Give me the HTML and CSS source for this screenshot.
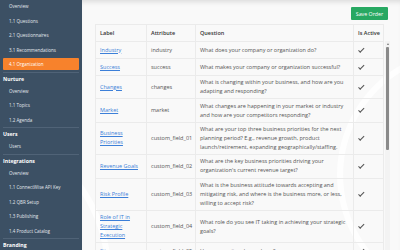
FILE: index.html
```html
<!DOCTYPE html>
<html lang="en">
<head>
    <meta charset="UTF-8">
    <title>Organization</title>
    <link rel="stylesheet" href="styles.css">
</head>
<body>
    <div class="layout">
        <nav class="sidebar">
            <div class="nav-section first">
                <a class="nav-item">Overview</a>
                <a class="nav-item">1.1 Questions</a>
                <a class="nav-item">2.1 Questionnaires</a>
                <a class="nav-item">3.1 Recommendations</a>
                <a class="nav-item active">4.1 Organization</a>
            </div>
            <div class="nav-section">
                <div class="nav-title">Nurture</div>
                <a class="nav-item">Overview</a>
                <a class="nav-item">1.1 Topics</a>
                <a class="nav-item">1.2 Agenda</a>
            </div>
            <div class="nav-section">
                <div class="nav-title">Users</div>
                <a class="nav-item">Users</a>
            </div>
            <div class="nav-section">
                <div class="nav-title">Integrations</div>
                <a class="nav-item">Overview</a>
                <a class="nav-item">1.1 ConnectWise API Key</a>
                <a class="nav-item">1.2 QBR Setup</a>
                <a class="nav-item">1.3 Publishing</a>
                <a class="nav-item">1.4 Product Catalog</a>
            </div>
            <div class="nav-section">
                <div class="nav-title">Branding</div>
            </div>
        </nav>

        <main class="content">
            <div class="toolbar">
                <button class="btn-save">Save Order</button>
            </div>

            <div class="table-wrap">
                <table class="fields">
                    <thead>
                        <tr>
                            <th class="col-label">Label</th>
                            <th class="col-attr">Attribute</th>
                            <th class="col-question">Question</th>
                            <th class="col-active">Is Active</th>
                        </tr>
                    </thead>
                    <tbody>
                        <tr>
                            <td><a href="#">Industry</a></td>
                            <td>industry</td>
                            <td>What does your company or organization do?</td>
                            <td><span class="check"></span></td>
                        </tr>
                        <tr>
                            <td><a href="#">Success</a></td>
                            <td>success</td>
                            <td>What makes your company or organization successful?</td>
                            <td><span class="check"></span></td>
                        </tr>
                        <tr>
                            <td><a href="#">Changes</a></td>
                            <td>changes</td>
                            <td>What is changing within your business, and how are you adapting and responding?</td>
                            <td><span class="check"></span></td>
                        </tr>
                        <tr>
                            <td><a href="#">Market</a></td>
                            <td>market</td>
                            <td>What changes are happening in your market or industry and how are your competitors responding?</td>
                            <td><span class="check"></span></td>
                        </tr>
                        <tr>
                            <td><a href="#">Business Priorities</a></td>
                            <td>custom_field_01</td>
                            <td>What are your top three business priorities for the next planning period? E.g., revenue growth, product launch/retirement, expanding geographically/staffing.</td>
                            <td><span class="check"></span></td>
                        </tr>
                        <tr>
                            <td><a href="#">Revenue Goals</a></td>
                            <td>custom_field_02</td>
                            <td>What are the key business priorities driving your organization's current revenue target?</td>
                            <td><span class="check"></span></td>
                        </tr>
                        <tr>
                            <td><a href="#">Risk Profile</a></td>
                            <td>custom_field_03</td>
                            <td>What is the business attitude towards accepting and mitigating risk, and where is the business more, or less, willing to accept risk?</td>
                            <td><span class="check"></span></td>
                        </tr>
                        <tr>
                            <td><a href="#">Role of IT in Strategic Execution</a></td>
                            <td>custom_field_04</td>
                            <td>What role do you see IT taking in achieving your strategic goals?</td>
                            <td><span class="check"></span></td>
                        </tr>
                        <tr>
                            <td><a href="#">Sites</a></td>
                            <td>custom_field_05</td>
                            <td>How many sites do you have?</td>
                            <td><span class="check"></span></td>
                        </tr>
                    </tbody>
                </table>

                <div class="scrollbar">
                    <span class="scroll-arrow"></span>
                    <span class="scroll-thumb"></span>
                </div>
            </div>
        </main>
    </div>
</body>
</html>
```

FILE: styles.css
```css
* {
    margin: 0;
    padding: 0;
    box-sizing: border-box;
}

html, body {
    height: 100%;
    overflow: hidden;
}

body {
    font-family: 'Open Sans', 'Liberation Sans', sans-serif;
    color: #555;
    background: #fafafa;
}

.layout {
    display: flex;
    height: 100%;
}

/* Sidebar */
.sidebar {
    width: 82px;
    flex-shrink: 0;
    background: #3c5064;
    padding: 0 3px;
    box-shadow: 1px 0 2px rgba(0,0,0,0.15);
}

.nav-section {
    border-top: 1px solid #506377;
}

.nav-section.first {
    border-top: none;
    margin-top: -1px;
}

.nav-title {
    color: #fff;
    font-weight: 700;
    font-size: 5.2px;
    line-height: 10px;
    padding-top: 1px;
}

.nav-item {
    display: flex;
    align-items: center;
    height: 14.5px;
    padding-left: 6px;
    font-size: 4.5px;
    color: #e4e9ee;
}

.nav-item.active {
    background: #f7822c;
    color: #fff;
    height: 12px;
    margin: 1.25px 0;
    border-radius: 1px;
}

/* Content */
.content {
    flex: 1;
    overflow: hidden;
    padding: 7px 10px 0 13px;
    box-shadow: inset 0 5px 5px -3px rgba(0,0,0,0.12);
    background:
        radial-gradient(circle at 120% 70%, transparent 120px, rgba(255,255,255,0.9) 121px, rgba(255,255,255,0.9) 126px, transparent 127px),
        radial-gradient(circle at -40% 110%, transparent 150px, rgba(255,255,255,0.9) 151px, rgba(255,255,255,0.9) 156px, transparent 157px),
        #f9f9f9;
}

.toolbar {
    display: flex;
    justify-content: flex-end;
    padding-right: 2px;
    margin-bottom: 4px;
}

.btn-save {
    font-family: inherit;
    font-size: 5.3px;
    color: #fff;
    background: #27a862;
    border: none;
    border-radius: 1px;
    width: 37px;
    height: 13px;
}

.table-wrap {
    display: flex;
}

.fields {
    width: 288px;
    flex-shrink: 0;
    table-layout: fixed;
    border-collapse: collapse;
    font-size: 5.5px;
    line-height: 9px;
    border: 1px solid #ebebeb;
}

.fields th,
.fields td {
    border: 1px solid #ebebeb;
    padding: 2.2px 4px;
    text-align: left;
    vertical-align: middle;
}

.fields th {
    color: #333;
    font-weight: 600;
    white-space: nowrap;
}

.fields tr {
    height: 17px;
}

.col-label { width: 51px; }
.col-attr { width: 49px; }
.col-question { width: 158px; }
.col-active { width: 30px; }

.fields a {
    color: #3c7fd8;
    text-decoration: underline;
}

.check {
    display: inline-block;
    width: 5.5px;
    height: 2.8px;
    margin-left: 1px;
    border-left: 0.9px solid #555;
    border-bottom: 0.9px solid #555;
    transform: rotate(-45deg) translateY(-1px);
}

/* scrollbar column */
.scrollbar {
    width: 6px;
    margin-top: 17px;
    margin-left: 1px;
    background: #f3f3f3;
    display: flex;
    flex-direction: column;
    align-items: center;
    padding-top: 2px;
}

.scroll-arrow {
    width: 0;
    height: 0;
    border-left: 1.5px solid transparent;
    border-right: 1.5px solid transparent;
    border-bottom: 2px solid #777;
}

.scroll-thumb {
    width: 3px;
    height: 103px;
    margin-top: 2px;
    background: #8a8a8a;
    border-radius: 1px;
}
```
